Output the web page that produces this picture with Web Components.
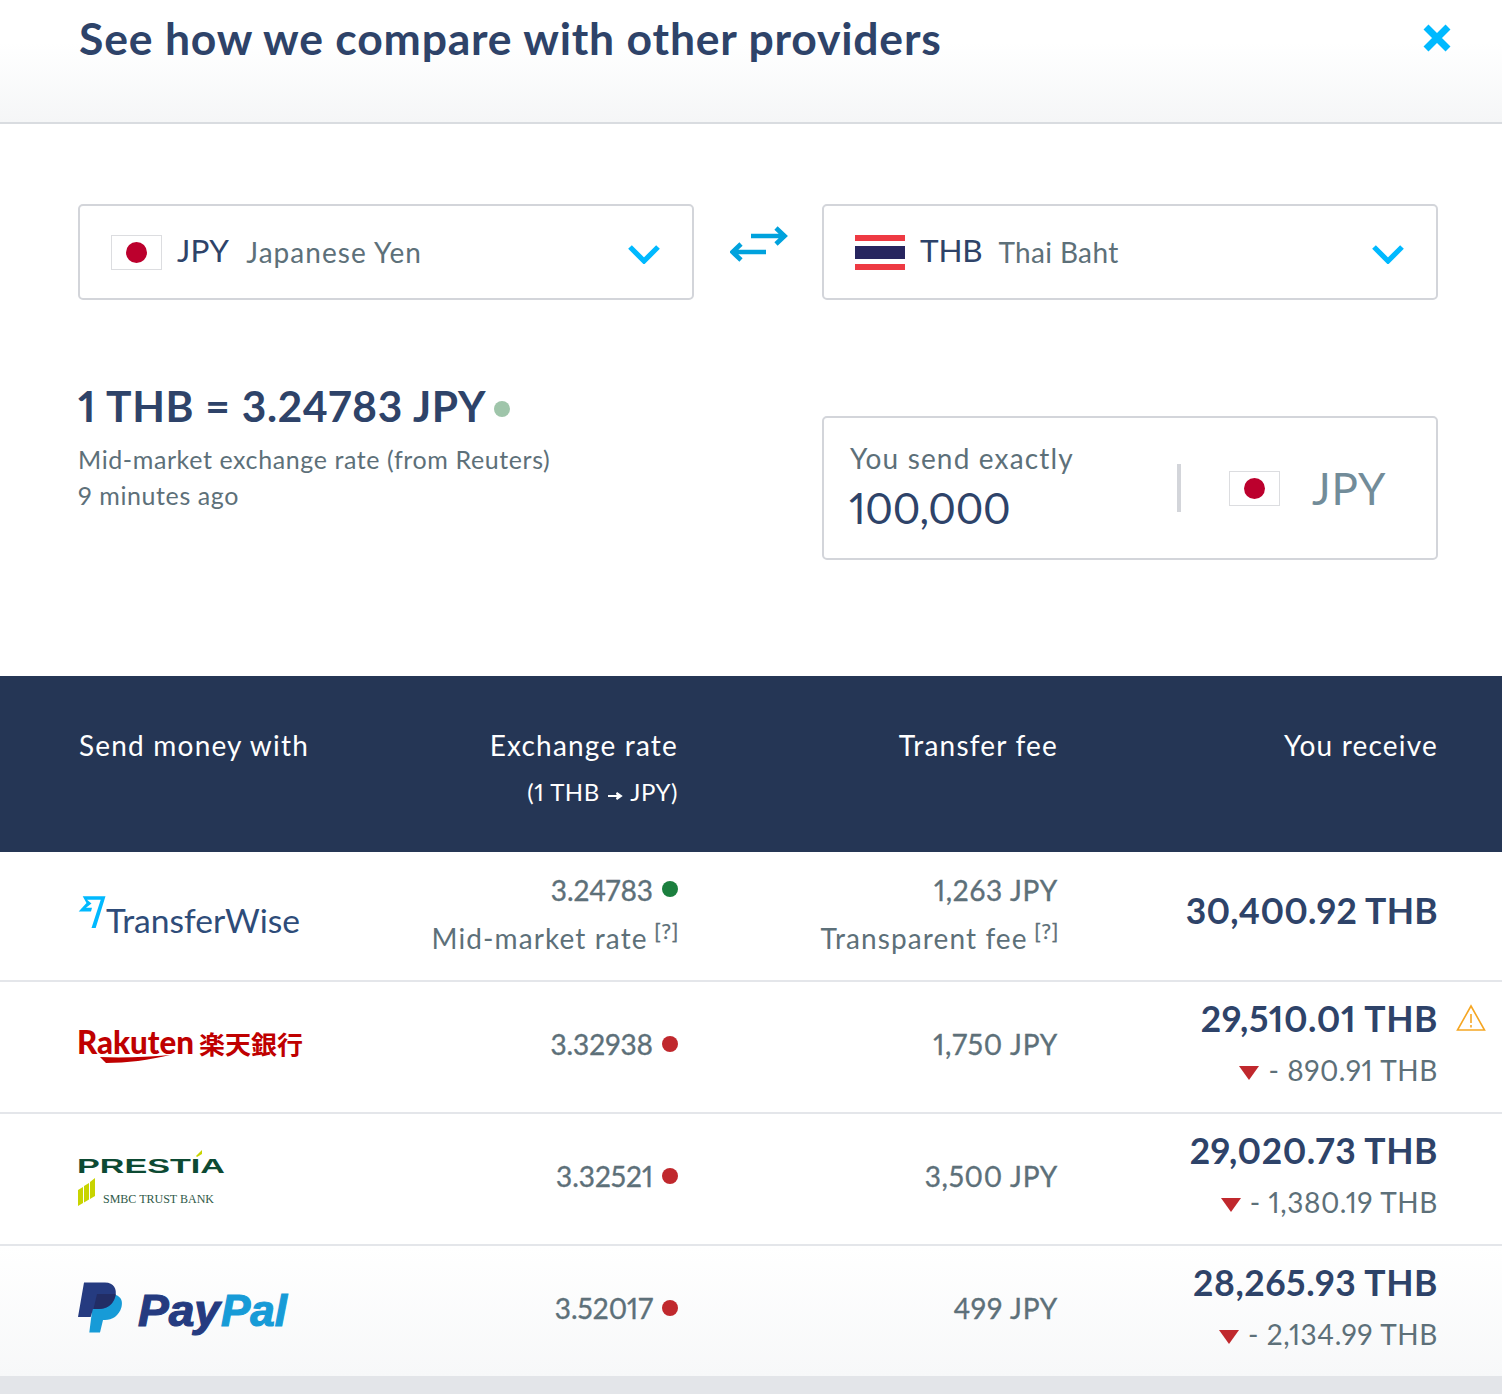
<!DOCTYPE html>
<html><head><meta charset="utf-8"><title>Compare</title>
<style>
html,body{margin:0;padding:0;background:#fff}
body{font-family:Lato,"Noto Sans CJK JP",sans-serif;width:1502px;height:1394px;overflow:hidden;font-feature-settings:"pnum" 1;font-variant-numeric:proportional-nums}
</style></head><body>
<cmp-modal></cmp-modal>
<script>
function def(name,html){customElements.define(name,class extends HTMLElement{connectedCallback(){if(this.shadowRoot)return;const r=this.attachShadow({mode:'open'});r.innerHTML=typeof html==='function'?html(this):html;}})}
def('flag-jp',`<style>:host{display:inline-flex;width:51px;height:35px;box-sizing:border-box;border:1px solid #dcdde0;background:#fff;align-items:center;justify-content:center;flex:none}i{display:block;width:21px;height:21px;border-radius:50%;background:#bc002d}</style><i></i>`);
def('flag-th',`<style>:host{display:inline-flex;width:50px;height:35px;flex:none;flex-direction:column}i{display:block}</style><i style="height:6px;background:#ee3a43"></i><i style="height:5px;background:#fff"></i><i style="height:13px;background:#27255f"></i><i style="height:5px;background:#fff"></i><i style="height:6px;background:#ee3a43"></i>`);
def('cur-select',h=>`<style>
:host{display:flex;align-items:center;box-sizing:border-box;width:616px;height:96px;border:2px solid #d3d5da;border-radius:5px;padding:0 31px;background:#fff}
.c{font-size:31.5px;color:#2e4369;margin-left:15px;letter-spacing:${h.getAttribute('cls')||.3}px;position:relative;top:-2px}
.n{font-size:28px;color:#5d7079;margin-left:${h.getAttribute('gap')||17}px;letter-spacing:${h.getAttribute('ls')||1.05}px}
svg{margin-left:auto;margin-right:1px;position:relative;top:2px}
</style><slot></slot><span class="c">${h.getAttribute('code')}</span><span class="n">${h.getAttribute('name')}</span>
<svg width="32" height="20" viewBox="0 0 32 20"><path d="M2 3 16 17 30 3" fill="none" stroke="#00b9ff" stroke-width="5.200"/></svg>`);
def('swap-icon',`<style>:host{display:flex;width:128px;justify-content:center;align-items:center;height:96px}svg{position:relative;top:-8px;left:1px}</style>
<svg width="58" height="38" viewBox="0 0 58 38"><g fill="none" stroke="#00a2dd" stroke-width="4.700"><path d="M21 11H54M46 3 54.500 11 46 19"/><path d="M36 27H3M11 19 2.500 27 11 35"/></g></svg>`);
def('rate-info',`<style>:host{display:block;width:744px}
h2{margin:0;font-size:42.5px;font-weight:700;color:#2e4369;line-height:54px;letter-spacing:.7px;display:flex;align-items:center}
h2 i{display:block;width:16px;height:16px;border-radius:50%;background:#9fc5aa;margin-left:8px;position:relative;top:3px}
p{margin:0;font-size:25px;color:#5d7079;line-height:36px;letter-spacing:.6px}
.a{margin-top:8px}
</style><h2>1 THB = 3.24783 JPY<i></i></h2><p class="a">Mid-market exchange rate (from Reuters)</p><p>9 minutes ago</p>`);
def('send-box',`<style>:host{display:flex;box-sizing:border-box;width:616px;height:144px;border:2px solid #d3d5da;border-radius:5px;background:#fff;align-items:center}
.l{flex:1;padding-left:26px;margin-top:-3px}
.t{font-size:28px;color:#5d7079;letter-spacing:1.15px;line-height:36px}
.v{font-size:42px;color:#2e4369;line-height:52px;margin-top:6px;margin-left:-1px;letter-spacing:-.3px}
.d{width:4px;height:48px;background:#d3d5da}
.f{display:flex;align-items:center;width:255px;box-sizing:border-box;padding-left:48px}
.j{font-size:44px;color:#728c99;margin-left:32px;letter-spacing:.8px;line-height:1}
</style><div class="l"><div class="t">You send exactly</div><div class="v">100,000</div></div><div class="d"></div><div class="f"><flag-jp></flag-jp><span class="j">JPY</span></div>`);
def('table-head',`<style>:host{display:grid;grid-template-columns:300px 300px 380px 380px;padding:49px 64px 0 78px;height:176px;background:#253655;color:#fff;box-sizing:border-box;font-size:28px;letter-spacing:1.2px;line-height:40px}
div{text-align:right}div.first{text-align:left;padding-left:1px}
small{display:block;font-size:24px;letter-spacing:.5px;margin-top:7px}
</style><div class="first">Send money with</div><div>Exchange rate<small>(1 THB <svg width="16" height="10" viewBox="0 0 16 10" style="margin:0 1px"><path d="M1 5H13M9.500 1.800 14 5 9.500 8.200" fill="#fff" stroke="#fff" stroke-width="2"/></svg> JPY)</small></div><div>Transfer fee</div><div>You receive</div>`);
def('cmp-row',h=>{const a=n=>h.getAttribute(n);const bg=a('bg')||'#fff';const dot=a('dot')||'#c0282d';const two=!!a('rs');
return `<style>:host{display:grid;grid-template-columns:300px 300px 380px 380px;padding:0 64px 0 78px;box-sizing:border-box;height:${a('h')}px;border-bottom:2px solid #e4e6ea;background:${bg};align-items:center;position:relative}
.r{text-align:right;color:#5d7079;margin-top:${two?-5:-7}px}
.g{margin-top:${two?-11:-7}px}
.m{font-size:28px;-webkit-text-stroke:.35px #5d7079;letter-spacing:.75px;line-height:48px;display:flex;justify-content:flex-end;align-items:center}
.rate{letter-spacing:0}
.m i{display:block;width:16px;height:16px;border-radius:50%;background:${dot};margin-left:9px;position:relative;top:${two?-1:0}px}
.s{font-size:28px;letter-spacing:1.1px;line-height:48px}
sup{font-size:22px;line-height:0;vertical-align:10px;letter-spacing:.6px;margin-left:-2px;margin-right:-1px;-webkit-text-stroke:.25px #5d7079}
.t{font-size:35.5px;font-weight:700;color:#2e4369;letter-spacing:${two?.3:.55}px;line-height:52px}
.d{font-size:28px;color:#5d7079;letter-spacing:.6px;line-height:48px;margin-top:1px;display:flex;justify-content:flex-end;align-items:center}
.d svg{margin-right:9px;position:relative;top:3px}
.w{position:absolute;left:1456px;top:22px}
.logo{display:block}
</style><div class="logo"><slot></slot></div>
<div class="r"><div class="m rate">${a('rate')}<i></i></div>${two?`<div class="s">${a('rs')} <sup>[?]</sup></div>`:''}</div>
<div class="r"><div class="m">${a('fee')}</div>${a('fs')?`<div class="s">${a('fs')} <sup>[?]</sup></div>`:''}</div>
<div class="r g"><div class="t">${a('total')}</div>${a('diff')?`<div class="d"><svg width="20" height="14" viewBox="0 0 20 14"><path d="M0 0H20L10 14Z" fill="#c0282d"/></svg>- ${a('diff')}</div>`:''}</div>
${a('warn')?`<svg class="w" width="30" height="28" viewBox="0 0 30 28"><path d="M15 2 1.500 26H28.500Z" fill="none" stroke="#f5a623" stroke-width="1.600"/><path d="M15 10V19M15 21V23.500" stroke="#f5a623" stroke-width="1.600"/></svg>`:''}`});
def('logo-tw',`<style>:host{display:block;height:48px}</style><svg width="226" height="48" viewBox="0 0 226 48" style="display:block;overflow:visible"><path d="M4.700 4.300H27.500L17.700 36H13.500L22.700 7.800H9L13.500 11.500 8 15.800H14L13 19.500H.7L8.500 11Z" fill="#00b9ff"/><text x="28" y="41" font-family="Lato" font-size="33.500" fill="#2e4c79" textLength="194" lengthAdjust="spacingAndGlyphs">TransferWise</text></svg>`);
def('logo-rk',`<style>:host{display:block;height:40px}</style><svg width="226" height="40" viewBox="0 0 226 40" style="display:block;overflow:visible"><text x="-1" y="27" font-family="Lato" font-weight="900" font-size="32" fill="#bf0000" textLength="117" lengthAdjust="spacingAndGlyphs">Rakuten</text><text x="121" y="27" font-family="'Noto Sans CJK JP'" font-weight="700" font-size="25" fill="#bf0000" textLength="104" lengthAdjust="spacingAndGlyphs">楽天銀行</text><path d="M22 30C45 31 70 30 92 28C72 33 48 36 28 36Z" fill="#bf0000"/></svg>`);
def('logo-pr',`<style>:host{display:block;height:60px}</style><svg width="150" height="60" viewBox="0 0 150 60" style="display:block;overflow:visible"><text x="-1" y="24" font-family="Liberation Sans" font-weight="700" font-size="20" fill="#0d4a33" textLength="148" lengthAdjust="spacingAndGlyphs">PRESTIA</text><path d="M118 7 124 1V5L119 8Z" fill="#c8d400"/><path d="M0 41 5 38V54L0 57ZM6 37 11 34V50.500L6 53.500ZM12 33 17 29V47L12 50Z" fill="#c8d400"/><text x="25" y="54" font-family="Liberation Serif" font-size="13.500" fill="#2f5a48" textLength="111" lengthAdjust="spacingAndGlyphs">SMBC TRUST BANK</text></svg>`);
def('logo-pp',`<style>:host{display:block;height:52px;margin-top:-6px}</style><svg width="212" height="52" viewBox="0 0 212 52" style="display:block;overflow:visible"><path d="M16 13H38C43 15 45 19 43.500 25 41 34 34 38 27 38H25L22 50.500H11.300Z" fill="#179bd7"/><path d="M6 .5H27C36 .5 39 7 37.500 14 35 24 28 27 20 27H15L12.700 35H0Z" fill="#253b80"/><path d="M19 12H37.700C36 22 29 27 20 27H15.500Z" fill="#222d65"/><text x="60" y="44" font-family="Liberation Sans" font-weight="700" font-style="italic" font-size="44" fill="#253b80" stroke="#253b80" stroke-width="1.200" textLength="82" lengthAdjust="spacingAndGlyphs">Pay</text><text x="143" y="44" font-family="Liberation Sans" font-weight="700" font-style="italic" font-size="44" fill="#179bd7" stroke="#179bd7" stroke-width="1.200" textLength="66" lengthAdjust="spacingAndGlyphs">Pal</text></svg>`);
def('cmp-modal',`<style>:host{display:block;color:#2e4369}
header{height:124px;box-sizing:border-box;border-bottom:2px solid #d9dce0;background:linear-gradient(#fff 35%,#f5f6f7);padding:0 50px 0 79px;display:flex;justify-content:space-between}
h1{margin:0;font-size:44.5px;font-weight:700;line-height:76px;letter-spacing:.8px;color:#2e4369}
header svg{margin-top:23px}
.sel{display:flex;padding:80px 64px 0 78px}
.mid{display:flex;justify-content:space-between;padding:79px 64px 0 78px;height:376px;box-sizing:border-box}
.mid send-box{margin-top:37px}
.end{height:18px;background:#e3e5e9}
</style>
<header><h1>See how we compare with other providers</h1><svg width="30" height="30" viewBox="0 0 30 30"><path d="M4 4 26 26M26 4 4 26" stroke="#00b9ff" stroke-width="7"/></svg></header>
<div class="sel"><cur-select code="JPY" name="Japanese Yen"><flag-jp></flag-jp></cur-select><swap-icon></swap-icon><cur-select code="THB" name="Thai Baht" ls=".35" gap="16" cls="-.2"><flag-th></flag-th></cur-select></div>
<div class="mid"><rate-info></rate-info><send-box></send-box></div>
<table-head></table-head>
<cmp-row h="130" rate="3.24783" dot="#1b7f3e" rs="Mid-market rate" fee="1,263 JPY" fs="Transparent fee" total="30,400.92 THB"><logo-tw></logo-tw></cmp-row>
<cmp-row h="132" rate="3.32938" fee="1,750 JPY" total="29,510.01 THB" diff="890.91 THB" warn="1"><logo-rk></logo-rk></cmp-row>
<cmp-row h="132" rate="3.32521" fee="3,500 JPY" total="29,020.73 THB" diff="1,380.19 THB"><logo-pr></logo-pr></cmp-row>
<cmp-row h="130" bg="linear-gradient(#fff,#f7f8f9)" rate="3.52017" fee="499 JPY" total="28,265.93 THB" diff="2,134.99 THB" style="border-bottom:0"><logo-pp></logo-pp></cmp-row>
<div class="end"></div>`);
</script>
</body></html>
